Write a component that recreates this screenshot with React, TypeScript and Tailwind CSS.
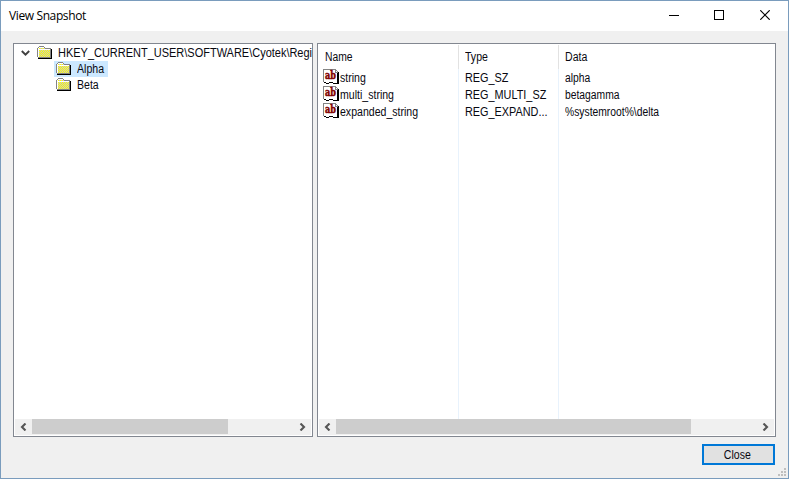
import React from "react";

const UI = "font-['Liberation_Sans','Arial',sans-serif] text-[12px] leading-[16px] text-[#080810] whitespace-pre";
const NARROW = "inline-block origin-left scale-x-[0.88]";
const CAPS = "inline-block origin-left scale-x-[0.905]";

function Folder() {
  return (
    <svg width="16" height="16" viewBox="0 0 16 16" shapeRendering="crispEdges" className="shrink-0">
      <defs>
        <pattern id="dither" width="2" height="2" patternUnits="userSpaceOnUse">
          <rect width="2" height="2" fill="#ffff00" />
          <rect width="1" height="1" fill="#c6c6c6" />
          <rect x="1" y="1" width="1" height="1" fill="#c6c6c6" />
        </pattern>
      </defs>
      <path d="M1 3h1v-1h5v1h1v1h6v8h-13z" fill="url(#dither)" />
      <path d="M1 3h1v-1h5v1h-5v1h11v1h-11v7h-1z" fill="#fff" />
      <path d="M0 3h1v9h-1zM1 2h1v1h-1zM2 1h5v1h-5zM7 2h1v1h-1zM8 3h6v1h-6zM13 4h1v8h-1zM1 12h13v1h-13z" fill="#848484" />
      <path d="M14 4h1v10h-14v-1h13z" fill="#000" />
    </svg>
  );
}

function StringIcon() {
  return (
    <svg width="16" height="16" viewBox="0 0 16 16" className="shrink-0">
      <g shapeRendering="crispEdges">
        <path d="M0 0h12l3 3v11h-3l-2-1-2 1h-2l-2-1h-2l-2-1z" fill="#fff" />
        <path d="M0 0h13v1h-12v12h-1zM12 1h1v2h2v1h-3zM13 1h1v1h-1zM14 2h1v1h-1z" fill="#848484" />
        <path d="M15 3h1v12h-3v-1h1v-10h1zM1 13h2v1h-2zM3 14h3v1h-3zM6 13h4v1h-4zM10 14h3v1h-3z" fill="#000" />
      </g>
      <text x="2" y="10" textLength="11" lengthAdjust="spacingAndGlyphs" strokeWidth="0.5" className="fill-[#800000] stroke-[#800000] font-['DejaVu_Serif',serif] text-[10.5px] font-bold">ab</text>
    </svg>
  );
}

function Chevron({ right = false }: { right?: boolean }) {
  return (
    <div className="flex h-[15px] w-[17px] shrink-0 items-center justify-center">
      <svg width="7" height="8" viewBox="0 0 7 8" className={right ? "-scale-x-100" : ""}>
        <path d="M5.5 .5 2 4 5.5 7.5" fill="none" stroke="#555" strokeWidth="2.1" />
      </svg>
    </div>
  );
}

function ScrollBar({ thumb }: { thumb: string }) {
  return (
    <div className="mx-px mb-px flex h-[16px] shrink-0 bg-[#f0f0f0]">
      <Chevron />
      <div className={"h-[15px] bg-[#cdcdcd] " + thumb} />
      <div className="grow" />
      <Chevron right />
    </div>
  );
}

const rows = [
  { name: "string", type: "REG_SZ", data: "alpha" },
  { name: "multi_string", type: "REG_MULTI_SZ", data: "betagamma" },
  { name: "expanded_string", type: "REG_EXPAND...", data: "%systemroot%\\delta" },
];

const controls = [
  { d: "M0 5.5h10", cell: "w-[44px]", crisp: true },
  { d: "M.5.5h9v9h-9z", cell: "w-[46px]", crisp: true },
  { d: "M.3.3l9.4 9.4M9.7.3.3 9.7", cell: "w-[46px]", crisp: false },
];

export default function App() {
  return (
    <div className="flex h-[479px] w-[789px] flex-col overflow-hidden border border-[#7a9cbd] bg-[#f0f0f0]">
      <header className="flex h-[30px] shrink-0 items-center justify-between bg-white pl-2">
        <h1 className="font-['Open_Sans','Noto_Sans',sans-serif] text-[12px] leading-4 tracking-[-0.38px] text-black">View Snapshot</h1>
        <div className="flex h-full">
          {controls.map((c) => (
            <div key={c.d} className={"flex justify-center pt-[9px] " + c.cell}>
              <svg width="10" height="10" viewBox="0 0 10 10" shapeRendering={c.crisp ? "crispEdges" : "auto"}>
                <path d={c.d} fill="none" stroke="#000" strokeWidth={c.crisp ? 1 : 1.2} />
              </svg>
            </div>
          ))}
        </div>
      </header>
      <main className="flex h-[406px] shrink-0 gap-1 px-3 pt-3">
        <section className="flex h-[394px] w-[300px] shrink-0 flex-col border border-[#828790] bg-white">
          <div className={"grow overflow-hidden pt-px " + UI}>
            <div className="flex h-4">
              <svg width="9" height="16" viewBox="0 0 9 16" className="ml-[7px] mr-[7px] shrink-0">
                <path d="M.8 6 4.5 9.7 8.2 6" fill="none" stroke="#404040" strokeWidth="1.9" />
              </svg>
              <Folder />
              <span className="ml-[5px] inline-block origin-left scale-x-[0.915]">HKEY_CURRENT_USER\SOFTWARE\Cyotek\Regi</span>
            </div>
            {["Alpha", "Beta"].map((n, i) => (
              <div key={n} className="flex h-4 pl-[40px]">
                <div className={"flex h-4 w-[54px] " + (i === 0 ? "bg-[#cce8ff]" : "")}>
                  <div className="pl-[2px]"><Folder /></div>
                  <span className={"ml-[5px] " + NARROW}>{n}</span>
                </div>
              </div>
            ))}
          </div>
          <ScrollBar thumb="w-[196px]" />
        </section>
        <section className="flex h-[394px] w-[459px] shrink-0 flex-col border border-[#828790] bg-white">
          <div className={"flex grow flex-col pt-px " + UI}>
            <div className="grid h-6 grid-cols-[141px_100px_1fr] leading-6">
              <div className="border-r border-[#e2e2e2] pl-[7px]"><span className="inline-block origin-left scale-x-[0.86]">Name</span></div>
              <div className="border-r border-[#e2e2e2] pl-[6px]"><span className={NARROW}>Type</span></div>
              <div className="pl-[6px]"><span className={NARROW}>Data</span></div>
            </div>
            <div className="grid grow grid-cols-[141px_100px_1fr]">
              <div className="border-r border-[#e8f2fc] pl-[5px]">
                {rows.map((r) => (
                  <div key={r.name} className="flex h-[17px]">
                    <StringIcon />
                    <span className={"ml-px pt-px " + NARROW}>{r.name}</span>
                  </div>
                ))}
              </div>
              <div className="border-r border-[#e8f2fc] pl-[6px]">
                {rows.map((r) => <div key={r.name} className="h-[17px] pt-px"><span className={CAPS}>{r.type}</span></div>)}
              </div>
              <div className="pl-[6px]">
                {rows.map((r) => <div key={r.name} className="h-[17px] pt-px"><span className="inline-block origin-left scale-x-[0.86]">{r.data}</span></div>)}
              </div>
            </div>
          </div>
          <ScrollBar thumb="w-[355px]" />
        </section>
      </main>
      <footer className="flex grow justify-end">
        <button className={"mt-[7px] flex h-[21px] w-[73px] items-center justify-center border-2 border-[#0078d7] bg-[#e1e1e1] pt-px pr-[2px] " + UI}>
          <span className="inline-block scale-x-[0.88]">Close</span>
        </button>
        <svg width="10" height="10" viewBox="0 0 10 10" shapeRendering="crispEdges" className="mt-auto ml-[3px]">
          <path d="M6 0h2v2h-2zM3 3h2v2h-2zM6 3h2v2h-2zM0 6h2v2h-2zM3 6h2v2h-2zM6 6h2v2h-2z" fill="#bfbfbf" />
        </svg>
      </footer>
    </div>
  );
}
